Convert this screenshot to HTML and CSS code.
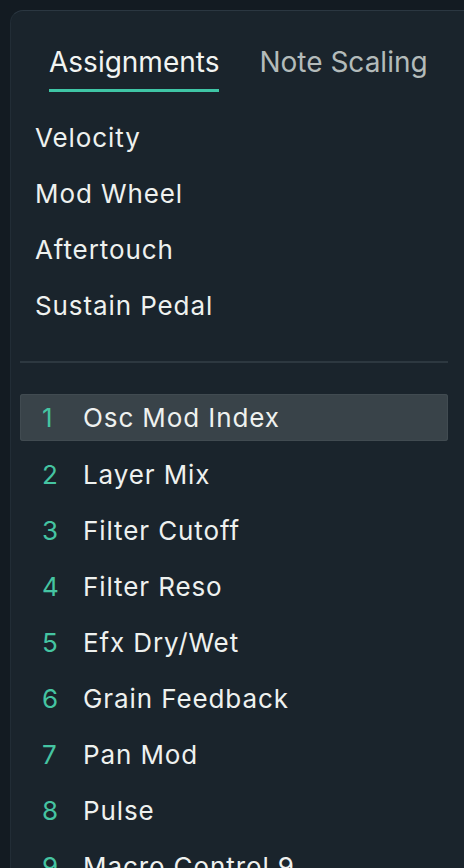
FILE: index.html
```html
<!DOCTYPE html>
<html>
<head>
<meta charset="utf-8">
<link rel="stylesheet" href="styles.css">
</head>
<body>
<div class="panel">
  <div class="tabs">
    <div class="tab active">Assignments</div>
    <div class="tab">Note Scaling</div>
  </div>
  <ul class="sources">
    <li>Velocity</li>
    <li>Mod Wheel</li>
    <li>Aftertouch</li>
    <li>Sustain Pedal</li>
  </ul>
  <div class="divider"></div>
  <ul class="macros">
    <li class="selected"><span class="num">1</span><span class="name">Osc Mod Index</span></li>
    <li><span class="num">2</span><span class="name">Layer Mix</span></li>
    <li><span class="num">3</span><span class="name">Filter Cutoff</span></li>
    <li><span class="num">4</span><span class="name">Filter Reso</span></li>
    <li><span class="num">5</span><span class="name">Efx Dry/Wet</span></li>
    <li><span class="num">6</span><span class="name">Grain Feedback</span></li>
    <li><span class="num">7</span><span class="name">Pan Mod</span></li>
    <li><span class="num">8</span><span class="name">Pulse</span></li>
    <li><span class="num">9</span><span class="name">Macro Control 9</span></li>
  </ul>
</div>
</body>
</html>
```
FILE: styles.css
```css
html, body {
  margin: 0;
  padding: 0;
  height: 100%;
  overflow: hidden;
}
body {
  background: #131b22;
  font-family: Inter, "Noto Sans", sans-serif;
  color: #eef1ef;
}
.panel {
  margin: 10px 0 0 10px;
  height: 900px;
  background: #1a242c;
  border-top: 1px solid #2b3741;
  border-left: 1px solid #222d36;
  border-top-left-radius: 13px;
}
.tabs {
  display: flex;
  gap: 40px;
  padding: 34px 0 0 38px;
}
.tab {
  font-size: 28px;
  line-height: 34px;
  color: #b3bbba;
  padding-bottom: 10px;
  border-bottom: 3px solid transparent;
}
.tab.active {
  color: #f2f4f2;
  border-bottom-color: #3fc6a6;
}
ul {
  list-style: none;
  margin: 0;
  padding: 0;
}
.sources {
  padding: 18px 0 0 24px;
}
.sources li {
  font-size: 26px;
  letter-spacing: 0.9px;
  line-height: 56px;
  height: 56px;
}
.divider {
  height: 2px;
  background: #2d3840;
  margin: 27px 16px 0 9px;
}
.macros {
  padding: 31px 16px 0 9px;
}
.macros li {
  display: flex;
  align-items: center;
  height: 56px;
  font-size: 26px;
  letter-spacing: 0.9px;
  border-radius: 3px;
}
.macros li.selected {
  height: 47px;
  margin-bottom: 5px;
  background: #394349;
  box-shadow: inset 0 0 0 1px #414b51;
}
.num {
  width: 23px;
  padding-left: 22px;
  color: #45c4a2;
  letter-spacing: 0;
}
.name {
  padding-left: 18px;
}
```
